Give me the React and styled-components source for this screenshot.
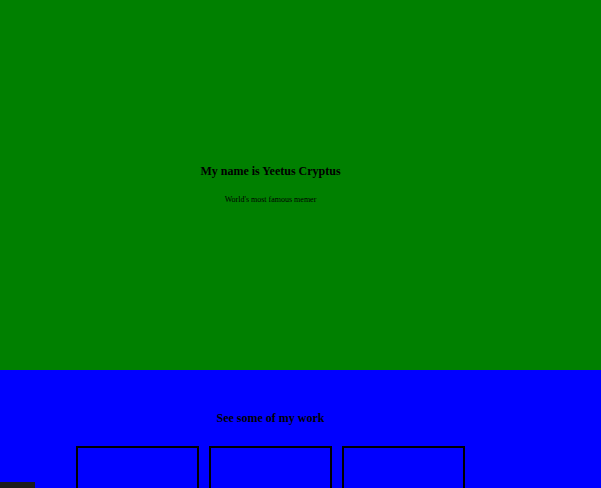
import React from "react";
import styled, { createGlobalStyle } from "styled-components";

const GlobalStyle = createGlobalStyle`
  html, body {
    margin: 0;
    padding: 0;
    font-family: "Liberation Serif", "Times New Roman", serif;
    color: #000;
  }
`;

const Hero = styled.section`
  height: 370px;
  background-color: #008000;
  display: flex;
  flex-direction: column;
  align-items: center;
  justify-content: center;
  width: 100%;
`;

const HeroInner = styled.div`
  width: 541px;
  display: flex;
  flex-direction: column;
  align-items: center;
  margin-right: 60px;
  padding-bottom: 2px;
`;

const Title = styled.h1`
  margin: 0;
  font-size: 12px;
  font-weight: bold;
  line-height: 16px;
`;

const Subtitle = styled.p`
  margin: 15px 0 0;
  font-size: 8px;
  line-height: 12px;
`;

const Work = styled.section`
  background-color: #0000ff;
  padding-top: 40px;
  min-height: 300px;
`;

const WorkInner = styled.div`
  width: 541px;
  display: flex;
  flex-direction: column;
  align-items: center;
`;

const SectionTitle = styled.h2`
  margin: 0;
  font-size: 12px;
  font-weight: bold;
  line-height: 16px;
`;

const Cards = styled.div`
  display: flex;
  gap: 10px;
  margin-top: 20px;
`;

const Card = styled.div`
  width: 119px;
  height: 160px;
  border: 2px solid #000;
`;

const Corner = styled.div`
  position: fixed;
  left: 0;
  bottom: 0;
  width: 35px;
  height: 6px;
  background-color: #1c1c1c;
`;

export default function App() {
  return (
    <>
      <GlobalStyle />
      <Hero>
        <HeroInner>
          <Title>My name is Yeetus Cryptus</Title>
          <Subtitle>World's most famous memer</Subtitle>
        </HeroInner>
      </Hero>
      <Work>
        <WorkInner>
          <SectionTitle>See some of my work</SectionTitle>
          <Cards>
            <Card />
            <Card />
            <Card />
          </Cards>
        </WorkInner>
      </Work>
      <Corner />
    </>
  );
}
